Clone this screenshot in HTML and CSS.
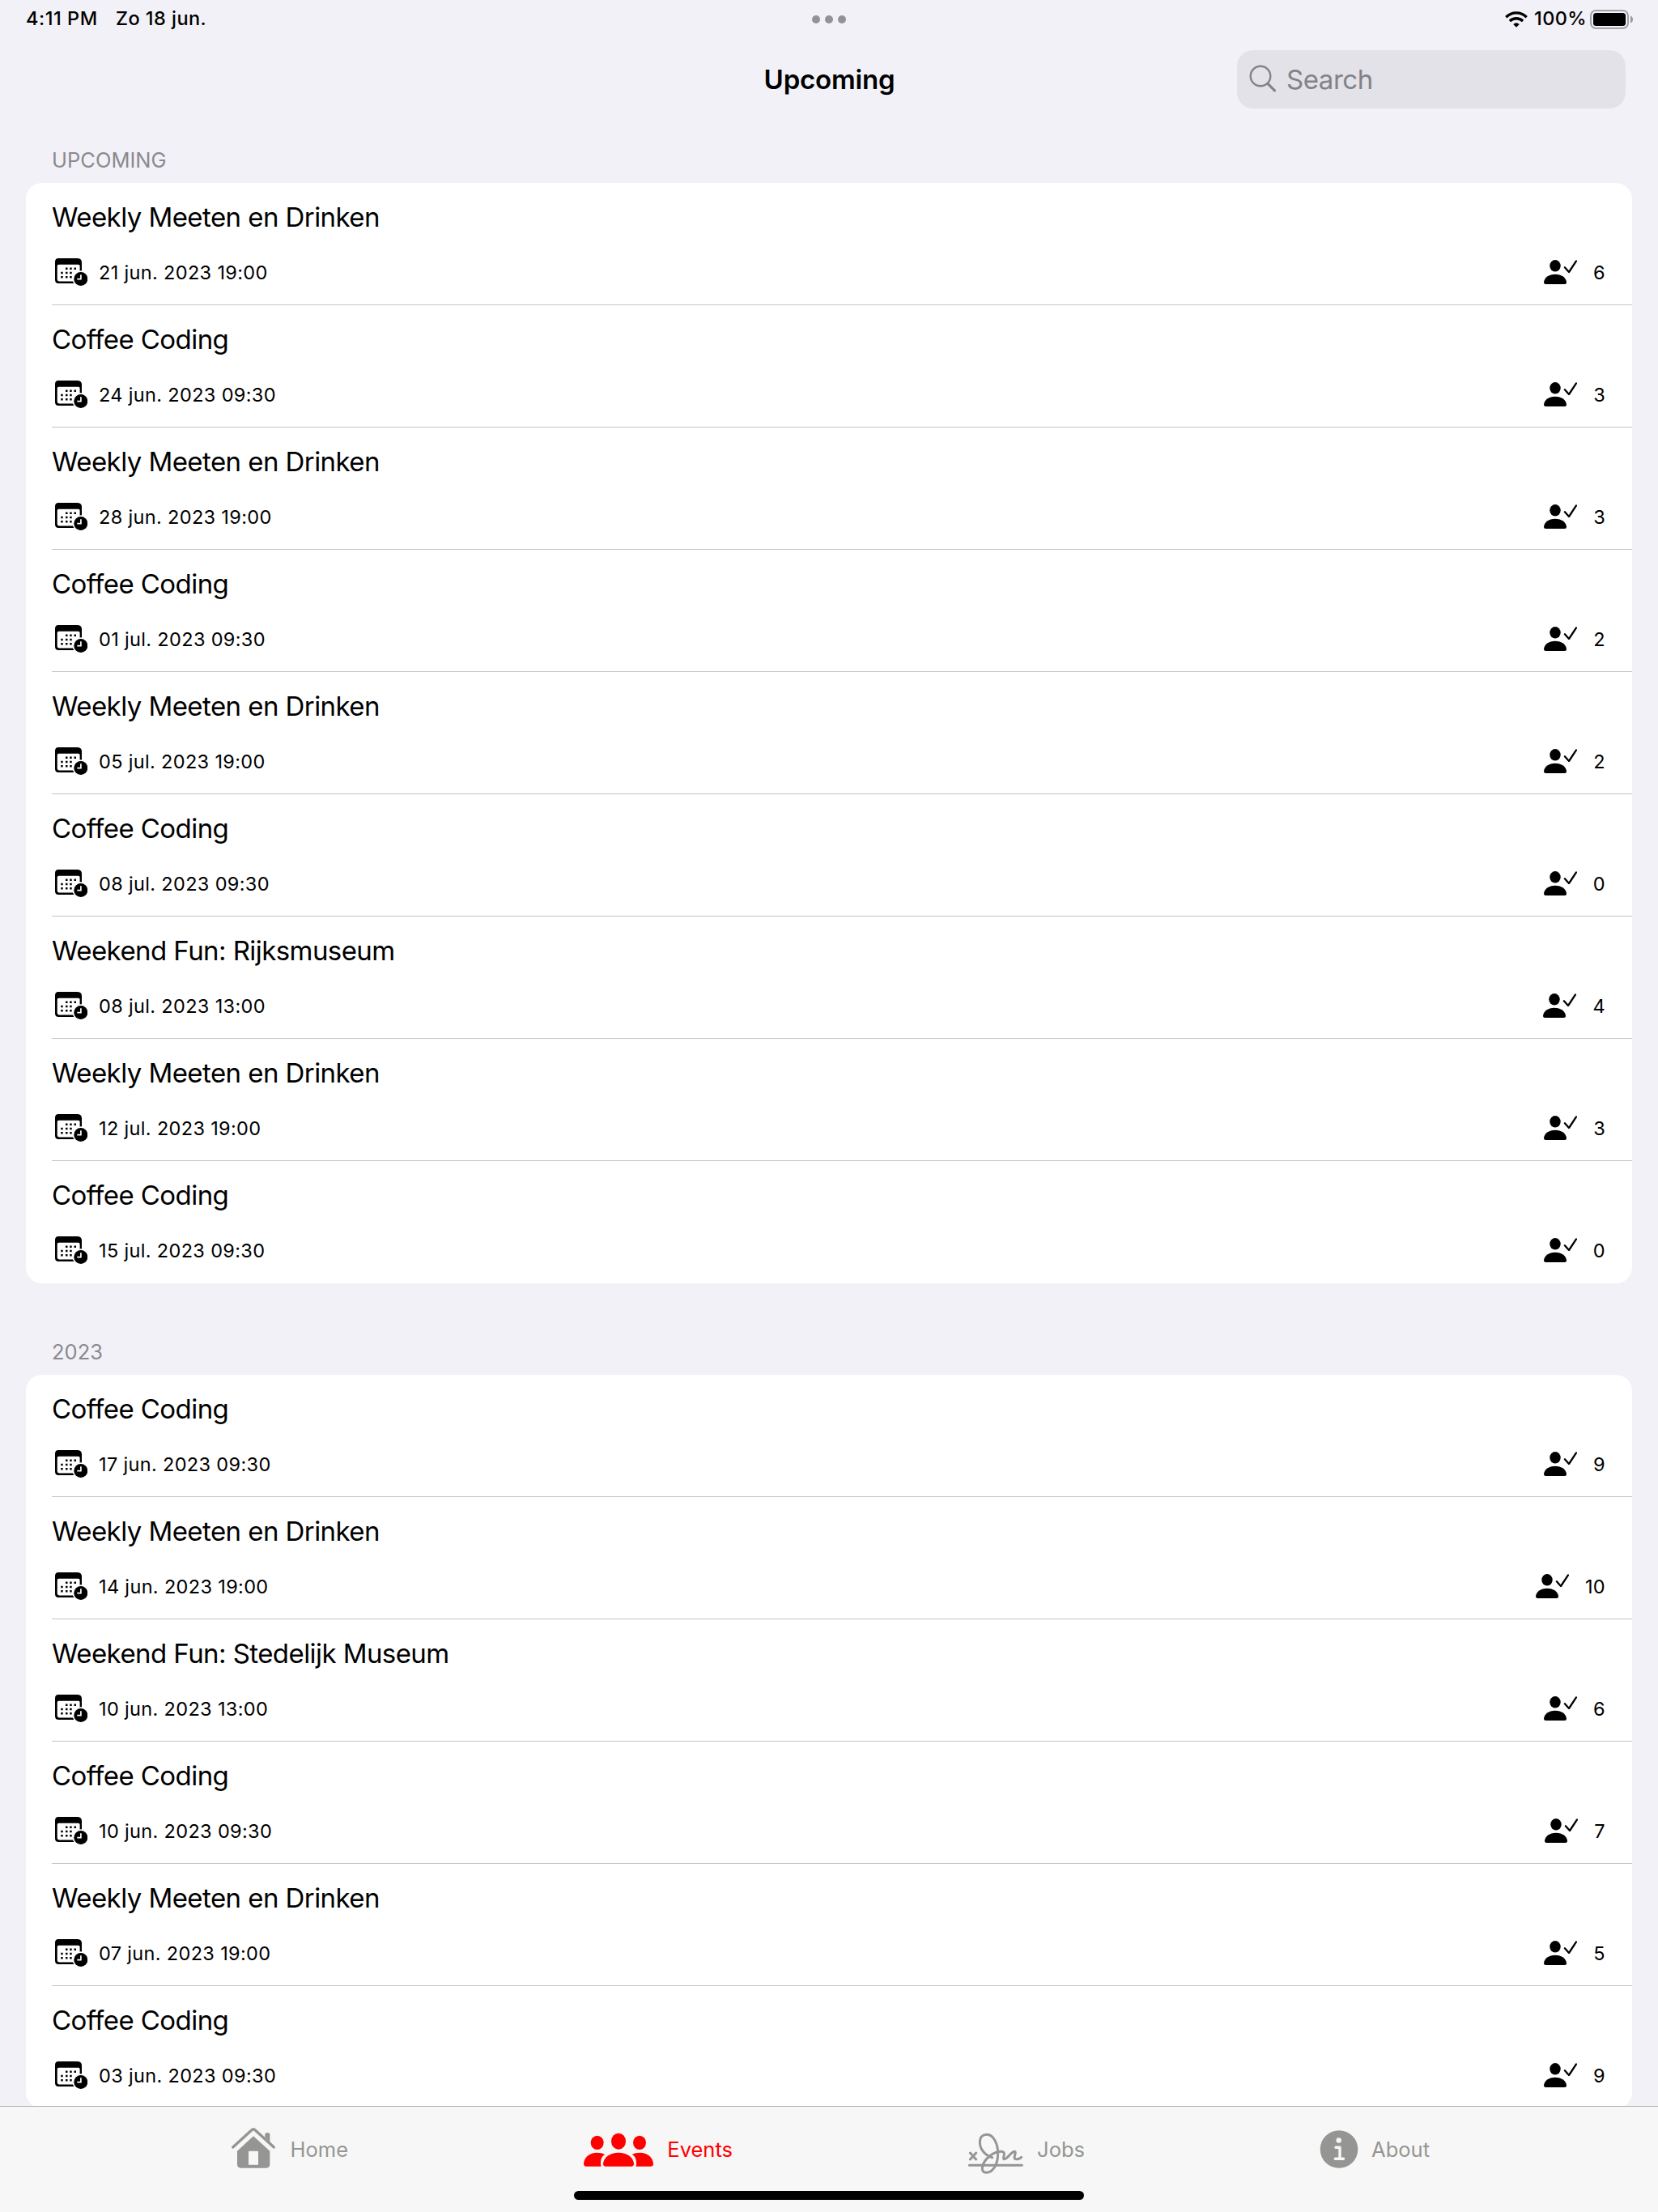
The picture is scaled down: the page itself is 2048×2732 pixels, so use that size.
FILE: index.html
```html
<!DOCTYPE html>
<html lang="nl">
<head>
<meta charset="utf-8">
<title>Upcoming</title>
<link rel="stylesheet" href="styles.css">
</head>
<body>
<svg class="sprite" aria-hidden="true">
  <symbol id="calendar" viewBox="0 0 42 40">
    <path fill-rule="evenodd" d="M6 2H29Q35 2 35 7V29Q35 33 30.500 33H6.500Q2 33 2 28.500V6.500Q2 2 6 2ZM6.500 9.700Q4.700 9.700 4.700 11.500V28Q4.700 30.400 7 30.400H30Q32.600 30.400 32.600 28V11.500Q32.600 9.700 30.800 9.700Z"/>
    <path d="M15 13.500h2.500v2.500h-2.500zM20.200 13.500h2.500v2.500h-2.500zM25.500 13.500h2.500v2.500h-2.500zM9.200 18.800h2.500v2.500h-2.500zM15 18.800h2.500v2.500h-2.500zM20.200 18.800h2.500v2.500h-2.500zM9.200 24.100h2.500v2.500h-2.500zM15 24.100h2.500v2.500h-2.500zM20.200 24.100h2.500v2.500h-2.500z"/>
    <circle cx="33.800" cy="27.500" r="10.300" fill="#fff"/>
    <circle cx="33.800" cy="27.500" r="8.500"/>
    <path d="M33.900 22.200V27.700H29.300" fill="none" stroke="#fff" stroke-width="1.700"/>
  </symbol>
  <symbol id="attendee" viewBox="0 0 42 40">
    <ellipse cx="15" cy="11.300" rx="6.700" ry="7.300"/>
    <path d="M3.500 34Q1 34 1 31.500C1.500 26 7 21.700 15 21.700S28.500 26 29 31.500Q29 34 26.500 34Z"/>
    <path d="M26.900 13.300L32 19L41 5.400" fill="none" stroke="#000" stroke-width="2.300" stroke-linecap="round" stroke-linejoin="round"/>
  </symbol>
</svg>
<div class="screen">
  <header class="status">
    <span class="clock">4:11 PM</span><span class="date">Zo 18 jun.</span>
    <span class="dots"><i></i><i></i><i></i></span>
    <svg class="wifi" viewBox="0 0 28 20"><g fill="none" stroke="#000" stroke-width="3.400"><path d="M1.300 7.200C8.500 .1 19.500 .1 26.700 7.200"/><path d="M5.900 12C10.500 7.700 17.500 7.700 22.100 12"/></g><path d="M10.200 15.900Q14 12.700 17.800 15.900L14 19.800Z"/></svg>
    <span class="percent">100%</span>
    <svg class="battery" viewBox="0 0 54 24"><rect x="1" y="1.200" width="46" height="21.600" rx="6" fill="none" stroke="#98979c" stroke-width="1.800"/><rect x="4" y="4" width="40" height="16" rx="3.500"/><path d="M50 7.500Q53 9 53 12T50 16.500Z" fill="#98979c"/></svg>
  </header>
  <nav class="bar">
    <h1>Upcoming</h1>
    <div class="search"><svg viewBox="0 0 34 36"><circle cx="14" cy="14" r="12.300"/><path d="M23.300 23.700L31.500 31.800" stroke-width="3.200"/></svg><span>Search</span></div>
  </nav>
  <main>
    <h2>UPCOMING</h2>
    <ul class="card">
      <li><h3>Weekly Meeten en Drinken</h3><p><svg><use href="#calendar"/></svg><time>21 jun. 2023 19:00</time><svg><use href="#attendee"/></svg><b>6</b></p></li>
      <li><h3>Coffee Coding</h3><p><svg><use href="#calendar"/></svg><time>24 jun. 2023 09:30</time><svg><use href="#attendee"/></svg><b>3</b></p></li>
      <li><h3>Weekly Meeten en Drinken</h3><p><svg><use href="#calendar"/></svg><time>28 jun. 2023 19:00</time><svg><use href="#attendee"/></svg><b>3</b></p></li>
      <li><h3>Coffee Coding</h3><p><svg><use href="#calendar"/></svg><time>01 jul. 2023 09:30</time><svg><use href="#attendee"/></svg><b>2</b></p></li>
      <li><h3>Weekly Meeten en Drinken</h3><p><svg><use href="#calendar"/></svg><time>05 jul. 2023 19:00</time><svg><use href="#attendee"/></svg><b>2</b></p></li>
      <li><h3>Coffee Coding</h3><p><svg><use href="#calendar"/></svg><time>08 jul. 2023 09:30</time><svg><use href="#attendee"/></svg><b>0</b></p></li>
      <li><h3>Weekend Fun: Rijksmuseum</h3><p><svg><use href="#calendar"/></svg><time>08 jul. 2023 13:00</time><svg><use href="#attendee"/></svg><b>4</b></p></li>
      <li><h3>Weekly Meeten en Drinken</h3><p><svg><use href="#calendar"/></svg><time>12 jul. 2023 19:00</time><svg><use href="#attendee"/></svg><b>3</b></p></li>
      <li><h3>Coffee Coding</h3><p><svg><use href="#calendar"/></svg><time>15 jul. 2023 09:30</time><svg><use href="#attendee"/></svg><b>0</b></p></li>
    </ul>
    <h2>2023</h2>
    <ul class="card">
      <li><h3>Coffee Coding</h3><p><svg><use href="#calendar"/></svg><time>17 jun. 2023 09:30</time><svg><use href="#attendee"/></svg><b>9</b></p></li>
      <li><h3>Weekly Meeten en Drinken</h3><p><svg><use href="#calendar"/></svg><time>14 jun. 2023 19:00</time><svg><use href="#attendee"/></svg><b>10</b></p></li>
      <li><h3>Weekend Fun: Stedelijk Museum</h3><p><svg><use href="#calendar"/></svg><time>10 jun. 2023 13:00</time><svg><use href="#attendee"/></svg><b>6</b></p></li>
      <li><h3>Coffee Coding</h3><p><svg><use href="#calendar"/></svg><time>10 jun. 2023 09:30</time><svg><use href="#attendee"/></svg><b>7</b></p></li>
      <li><h3>Weekly Meeten en Drinken</h3><p><svg><use href="#calendar"/></svg><time>07 jun. 2023 19:00</time><svg><use href="#attendee"/></svg><b>5</b></p></li>
      <li><h3>Coffee Coding</h3><p><svg><use href="#calendar"/></svg><time>03 jun. 2023 09:30</time><svg><use href="#attendee"/></svg><b>9</b></p></li>
    </ul>
  </main>
  <footer>
    <div class="tabs">
      <a class="tab"><svg width="54" height="60" viewBox="0 0 162 180"><path d="M5 85L74 22Q81 15 88 22L157 85" transform="translate(0 -1)" fill="none" stroke="currentColor" stroke-width="10" stroke-linecap="round" stroke-linejoin="round"/><path d="M124 46V36Q124 31 129 31H137Q142 31 142 36V66Z"/><path fill-rule="evenodd" d="M81 43L142 98V147Q142 161 128 161H35Q21 161 21 147V98ZM66 98Q63 98 63 101V149H99V101Q99 98 96 98Z"/></svg><span>Home</span></a>
      <a class="tab active"><svg width="86" height="60" viewBox="0 0 258 180"><ellipse cx="50" cy="67" rx="24" ry="26"/><ellipse cx="207" cy="67" rx="24" ry="26"/><ellipse cx="129" cy="62" rx="27" ry="30"/><path d="M79 111C66 117 63 133 63 143Q62 150 65 155H8Q0 155 0 145C2 120 22 104 50 104Q67 104 79 111ZM179 111C192 117 195 133 195 143Q196 150 193 155H250Q258 155 258 145C256 120 236 104 208 104Q191 104 179 111Z"/><path d="M80 155Q72 155 72 145C74 120 98 104 129 104S184 120 186 145Q186 155 178 155Z"/></svg><span>Events</span></a>
      <a class="tab"><svg width="68" height="60" viewBox="0 0 204 180"><g fill="none" stroke="currentColor" stroke-width="9" stroke-linecap="round" stroke-linejoin="round"><path d="M4 151H199M7 105L29 129M29 105L7 129"/><path d="M89 122C64 116 43 92 43 65C43 46 54 37 69 37C94 37 110 72 110 107C110 145 93 178 67 178C53 178 50 168 53 155C59 128 89 103 119 100C134 99 135 106 132 117C128 132 134 130 142 124C154 113 164 100 172 100C179 101 171 116 171 123C173 132 191 128 197 121"/></g></svg><span>Jobs</span></a>
      <a class="tab"><svg width="48" height="60" viewBox="0 0 48 60"><circle cx="23" cy="30.500" r="23.300"/><circle cx="22.700" cy="19.500" r="3.200" fill="#f7f7f7"/><path d="M19 28.300H24V42.300M18.300 42.300H28.500" fill="none" stroke="#f7f7f7" stroke-width="3.400" stroke-linecap="round" stroke-linejoin="round"/></svg><span>About</span></a>
    </div>
    <div class="indicator"></div>
  </footer>
</div>
</body>
</html>
```
FILE: styles.css
```css
* { box-sizing: border-box; margin: 0; padding: 0; }
body { background: #f2f1f7; font-family: Inter, "Liberation Sans", sans-serif; color: #000; font-feature-settings: "calt" 0; }
h1, h2, h3, b { font-weight: 400; }
svg { flex: none; overflow: visible; }
.sprite { display: none; }
.screen { display: flex; flex-direction: column; width: 2048px; height: 2732px; overflow: hidden; }

.status { display: flex; align-items: center; height: 48px; padding: 0 30px 0 32px; font-size: 23.500px; font-weight: 500; line-height: 46px; white-space: nowrap; }
.clock, .date, .percent { height: 48px; }
.clock { width: 111px; letter-spacing: .55px; }
.date { width: 860px; letter-spacing: .45px; }
.dots { display: flex; gap: 6px; }
.dots i { width: 10px; height: 10px; border-radius: 50%; background: #939298; }
.wifi { width: 28px; height: 20px; margin-left: auto; }
.percent { width: 68px; margin-left: 8px; letter-spacing: .4px; }
.battery { width: 54px; height: 24px; margin-left: 1px; }

.bar { display: grid; grid-template-columns: 1fr 480px; height: 86px; padding: 14px 40px 0 520px; }
.bar h1 { padding-left: 1px; font-size: 33px; font-weight: 600; line-height: 72px; text-align: center; letter-spacing: -.2px; }
.search { display: flex; align-items: center; height: 72px; padding-left: 15px; border-radius: 20px; background: #e3e2e8; color: #828287; font-size: 33px; letter-spacing: -.45px; }
.search svg { width: 34px; height: 36px; margin-right: 12px; fill: none; stroke: currentColor; stroke-width: 2.400; stroke-linecap: round; }

main { flex: 1; min-height: 0; overflow: hidden; padding: 0 32px; }
h2 { height: 92px; padding: 44px 0 0 32px; color: #8a8a8e; font-size: 25.500px; line-height: 40px; }
.card + h2 { height: 113px; padding-top: 65px; }
.card { list-style: none; border-radius: 20px; background: #fff; overflow: hidden; }
li { position: relative; height: 151px; padding: 20px 33px 0 32px; }
li:not(:last-child)::after { content: ""; position: absolute; left: 32px; right: 0; bottom: 0; height: 1px; background: #c4c4c6; }
h3 { font-size: 33px; line-height: 44px; white-space: nowrap; letter-spacing: -.57px; }
p { display: flex; align-items: center; height: 40px; margin: 27px 0 0 2px; font-size: 23.500px; line-height: 40px; letter-spacing: .34px; }
p svg { width: 42px; height: 40px; }
time { flex: 1; margin-left: 14px; white-space: nowrap; }
b { margin-left: 20px; }

footer { height: 131px; border-top: 1px solid #b1b3b2; background: #f7f7f7; color: #959693; }
.tabs { display: grid; grid-template-columns: 144px 184px 144px 135px; column-gap: 291px; height: 104px; padding: 22px 0 0 286px; }
.tab { display: flex; height: 60px; line-height: 61px; font-size: 25.500px; fill: currentColor; }
.tab span { margin-left: auto; white-space: nowrap; }
.active { color: #f00; }
.indicator { width: 630px; height: 11px; margin: 0 auto; border-radius: 6px; background: #000; }
```
